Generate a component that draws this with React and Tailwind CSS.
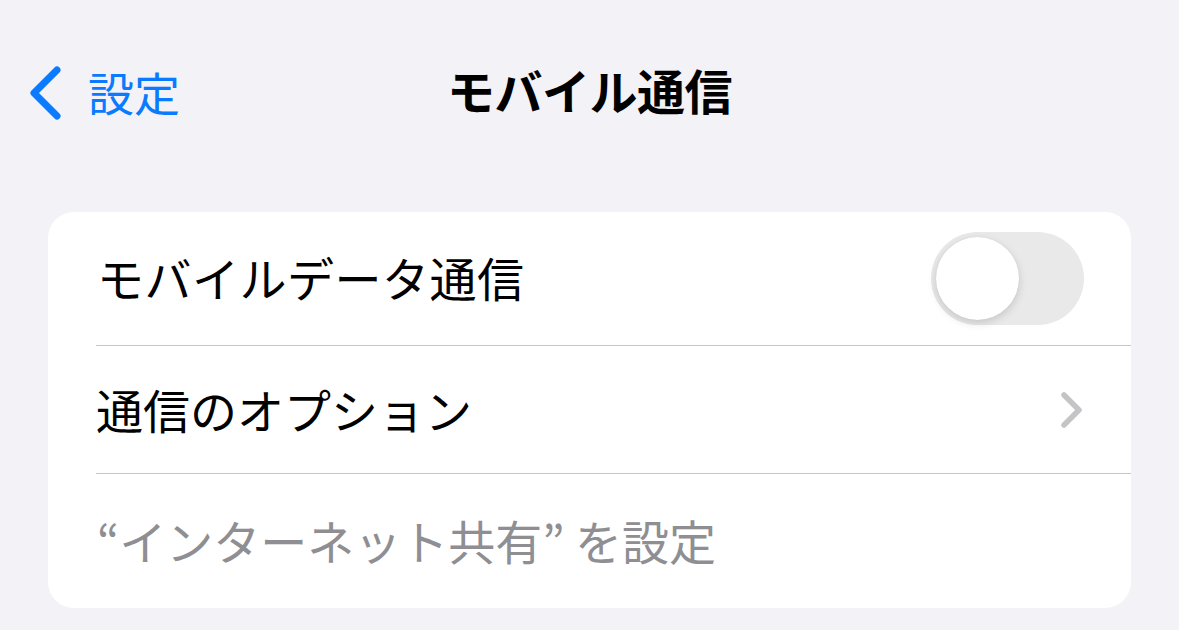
export default function App() {
  const font = { fontFamily: '"Noto Sans CJK JP", "Noto Sans", sans-serif' };
  return (
    <div className="w-[1179px] h-[630px] bg-[#f2f2f7] overflow-hidden" style={font}>
      <div className="relative h-[60px] mt-[61px] flex items-center">
        <div className="flex items-center pl-[28px] text-[#0a7aff]">
          <svg width="34" height="56" viewBox="0 0 34 56" className="shrink-0 mt-[4px]">
            <path d="M29 5 L6 28 L29 51" fill="none" stroke="#0a7aff" strokeWidth="7" strokeLinecap="round" strokeLinejoin="round" />
          </svg>
          <span className="ml-[26px] text-[46px] leading-none">設定</span>
        </div>
        <div className="absolute inset-0 flex items-center justify-center pointer-events-none">
          <span className="text-[48px] font-bold leading-none text-black -mt-[5px] tracking-[-0.5px]">モバイル通信</span>
        </div>
      </div>
      <div className="mx-[48px] mt-[91px] bg-white rounded-[26px] overflow-hidden">
        <div className="h-[133px] flex items-center pl-[49px] pr-[47px]">
          <span className="flex-1 text-[47px] leading-none text-black -mt-[4px] tracking-[0.5px]">モバイルデータ通信</span>
          <div className="w-[153px] h-[93px] rounded-full bg-[#e9e9ea] p-[5px] flex items-center">
            <div className="w-[83px] h-[83px] rounded-full bg-white shadow-[0_3px_8px_rgba(0,0,0,0.15),0_0_1px_rgba(0,0,0,0.1)]"></div>
          </div>
        </div>
        <div className="ml-[48px] border-t border-[#c6c6c8]"></div>
        <div className="h-[127px] flex items-center pl-[0px] pr-[47px] ml-[48px]">
          <span className="flex-1 text-[47px] leading-none text-black -mt-[2px]">通信のオプション</span>
          <svg width="24" height="38" viewBox="0 0 24 38">
            <path d="M4 4 L19 19 L4 34" fill="none" stroke="#c4c4c7" strokeWidth="5.5" strokeLinecap="round" strokeLinejoin="round" />
          </svg>
        </div>
        <div className="ml-[48px] border-t border-[#c6c6c8]"></div>
        <div className="h-[134px] flex items-center pl-[49px]">
          <span className="text-[47px] leading-none text-[#8e8e93] -mt-[3px]">“インターネット共有” を設定</span>
        </div>
      </div>
    </div>
  );
}
